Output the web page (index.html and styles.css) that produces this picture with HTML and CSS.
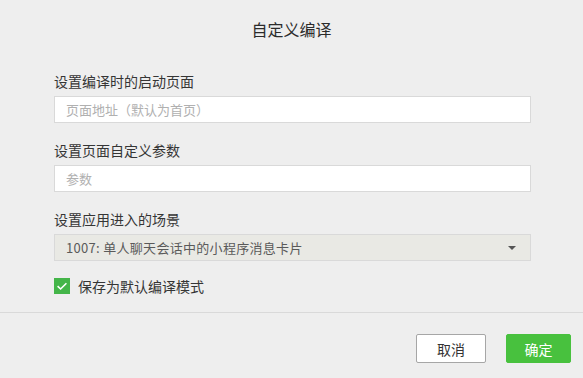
FILE: index.html
```html
<!DOCTYPE html>
<html lang="zh-CN">
<head>
<meta charset="utf-8">
<title>自定义编译</title>
<link rel="stylesheet" href="styles.css">
</head>
<body>
<div class="dialog">
  <div class="header">自定义编译</div>
  <div class="form">
    <div class="group">
      <div class="label">设置编译时的启动页面</div>
      <div class="input placeholder">页面地址（默认为首页）</div>
    </div>
    <div class="group">
      <div class="label">设置页面自定义参数</div>
      <div class="input placeholder">参数</div>
    </div>
    <div class="group">
      <div class="label">设置应用进入的场景</div>
      <div class="select">
        <span class="select-text">1007: 单人聊天会话中的小程序消息卡片</span>
        <span class="arrow"></span>
      </div>
    </div>
    <div class="check-row">
      <span class="checkbox">
        <svg width="16" height="16" viewBox="0 0 16 16"><path d="M3.6 8.2 L6.6 11 L12.4 5.2" fill="none" stroke="#fff" stroke-width="1.6"/></svg>
      </span>
      <span class="check-label">保存为默认编译模式</span>
    </div>
  </div>
  <div class="footer">
    <button class="btn btn-cancel">取消</button>
    <button class="btn btn-ok">确定</button>
  </div>
</div>
</body>
</html>
```
FILE: styles.css
```css
html, body {
  margin: 0;
  padding: 0;
}
body {
  width: 583px;
  height: 378px;
  background: #eeeeee;
  font-family: "Noto Sans CJK SC", "Liberation Sans", sans-serif;
  color: #353535;
  overflow: hidden;
}
.dialog {
  display: flex;
  flex-direction: column;
}
.header {
  height: 57px;
  box-sizing: border-box;
  padding-top: 19px;
  text-align: center;
  font-size: 16px;
  line-height: 20px;
  color: #2b2b2b;
}
.form {
  padding: 14px 52px 18px 54px;
  display: flex;
  flex-direction: column;
  gap: 17px;
  border-bottom: 1px solid #d9d9d9;
}
.group {
  display: flex;
  flex-direction: column;
  gap: 5px;
}
.label {
  font-size: 14px;
  line-height: 20px;
  color: #353535;
}
.input {
  height: 27px;
  box-sizing: border-box;
  background: #ffffff;
  border: 1px solid #d9d9d9;
  padding: 0 11px;
  font-size: 13px;
  line-height: 25px;
}
.placeholder {
  color: #b0b0b0;
}
.select {
  height: 27px;
  box-sizing: border-box;
  background: #e9e9e4;
  border: 1px solid #d9d9d9;
  padding: 0 14px 0 11px;
  display: flex;
  align-items: center;
  justify-content: space-between;
  font-size: 13px;
  color: #5a5a5a;
}
.select-text {
  letter-spacing: 0.3px;
  line-height: 25px;
}
.arrow {
  width: 0;
  height: 0;
  border-left: 4px solid transparent;
  border-right: 4px solid transparent;
  border-top: 4px solid #555555;
  margin-top: 1px;
}
.check-row {
  display: flex;
  align-items: center;
  gap: 8px;
  height: 16px;
}
.checkbox {
  width: 16px;
  height: 16px;
  background: #44b549;
  display: flex;
  align-items: center;
  justify-content: center;
}
.checkbox svg {
  display: block;
}
.check-label {
  font-size: 14px;
  line-height: 20px;
  color: #353535;
}
.footer {
  display: flex;
  justify-content: flex-end;
  gap: 20px;
  padding: 21px 12px 0 0;
}
.btn {
  height: 29px;
  box-sizing: border-box;
  font-family: "Noto Sans CJK SC", sans-serif;
  font-size: 14px;
  line-height: 20px;
  padding: 0;
  border-radius: 2px;
  cursor: pointer;
}
.btn-cancel {
  width: 70px;
  background: #ffffff;
  border: 1px solid #a6a6a6;
  color: #333333;
}
.btn-ok {
  width: 65px;
  background: #48c13e;
  border: 1px solid #48c13e;
  color: #ffffff;
}
```
